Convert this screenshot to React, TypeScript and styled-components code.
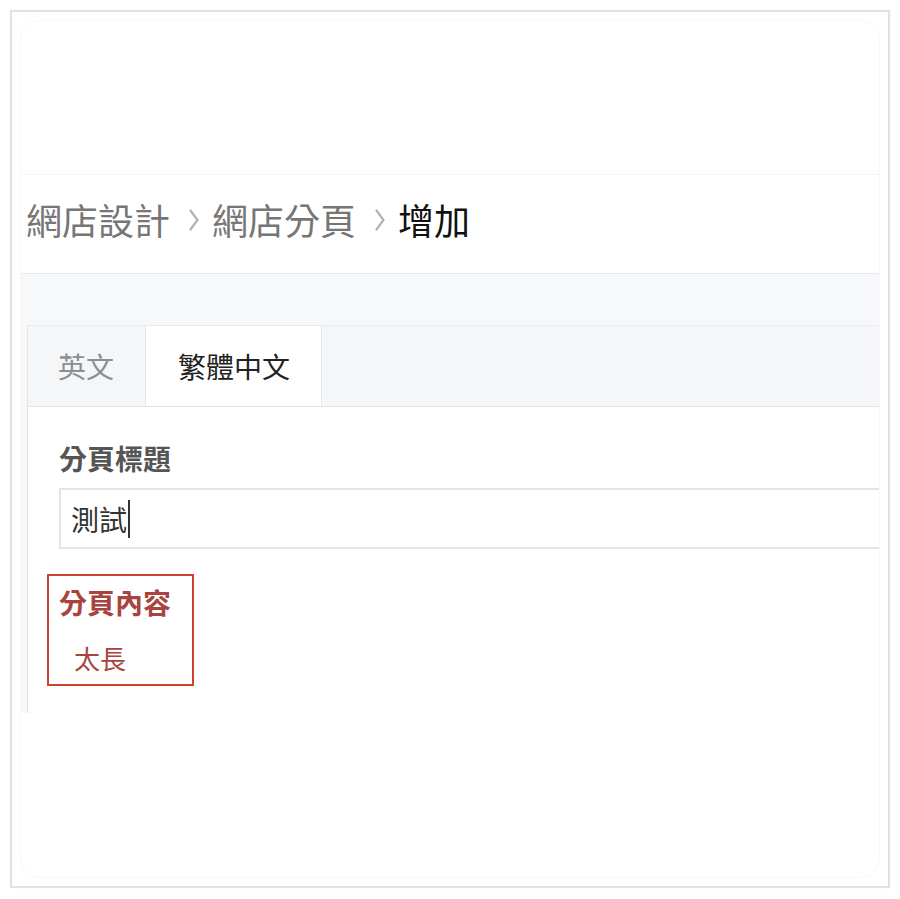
import React from "react";
import styled, { createGlobalStyle } from "styled-components";

const GlobalStyle = createGlobalStyle`
  html, body {
    margin: 0;
    padding: 0;
    background: #ffffff;
  }
  body {
    font-family: "Noto Sans CJK TC", "Noto Sans", "Liberation Sans", sans-serif;
  }
`;

function Chevron() {
  return (
    <ChevronIcon width="10" height="22" viewBox="0 0 10 22">
      <polyline points="1.5,1.5 8.5,11 1.5,20.5" fill="none" stroke="#aeb3ba" strokeWidth="2.2" strokeLinecap="round" strokeLinejoin="round" />
    </ChevronIcon>
  );
}

export default function App() {
  return (
    <>
      <GlobalStyle />
      <Frame>
        <Screen>
          <TopBar />
          <Breadcrumb>
            <Crumb>網店設計</Crumb>
            <Chevron />
            <Crumb>網店分頁</Crumb>
            <Chevron />
            <Crumb $current>增加</Crumb>
          </Breadcrumb>
          <Band>
            <Card>
              <TabBar>
                <Tab>英文</Tab>
                <Tab $active>繁體中文</Tab>
              </TabBar>
              <CardBody>
                <Label>分頁標題</Label>
                <TextBox>
                  測試
                  <Caret />
                </TextBox>
                <ErrorField>
                  <Label $error>分頁內容</Label>
                  <ErrorText>太長</ErrorText>
                </ErrorField>
              </CardBody>
            </Card>
          </Band>
        </Screen>
      </Frame>
    </>
  );
}

const Frame = styled.div`
  box-sizing: border-box;
  margin: 10px;
  height: 878px;
  border: 2px solid #e2e2e2;
  box-shadow: 0 0 1px rgba(0, 0, 0, 0.08);
  padding: 8px;
`;

const Screen = styled.div`
  box-sizing: border-box;
  height: 100%;
  border: 1px solid #f8f8f8;
  border-radius: 20px;
  overflow: hidden;
  display: flex;
  flex-direction: column;
  background: #ffffff;
`;

const TopBar = styled.div`
  height: 153px;
  flex-shrink: 0;
  border-bottom: 1px solid #f4f4f4;
`;

const Breadcrumb = styled.div`
  box-sizing: border-box;
  height: 98px;
  flex-shrink: 0;
  display: flex;
  align-items: center;
  padding: 0 0 10px 5px;
`;

const Crumb = styled.span<{ $current?: boolean }>`
  font-size: 36px;
  line-height: 44px;
  color: ${(p) => (p.$current ? "#111111" : "#767676")};
`;

const ChevronIcon = styled.svg`
  flex-shrink: 0;
  margin: 2px 13px 0 19px;
`;

const Band = styled.div`
  flex-shrink: 0;
  border-top: 1px solid #e7e9ec;
  background: #f7f8fa;
  padding: 51px 0 0 6px;
  display: flex;
`;

const Card = styled.div`
  flex: 1;
  background: #ffffff;
  border-left: 1px solid #e4e6e9;
  border-top: 1px solid #e8eaed;
`;

const TabBar = styled.div`
  display: flex;
  background: #f5f6f8;
  border-bottom: 1px solid #e2e4e7;
`;

const Tab = styled.div<{ $active?: boolean }>`
  height: 80px;
  line-height: 80px;
  padding: 0 31px 0 ${(p) => (p.$active ? "32px" : "30px")};
  font-size: 28px;
  border-right: 1px solid #e6e8eb;
  background: ${(p) => (p.$active ? "#ffffff" : "#f5f6f8")};
  color: ${(p) => (p.$active ? "#222222" : "#8a8f96")};
  margin-bottom: ${(p) => (p.$active ? "-1px" : "0")};
`;

const CardBody = styled.div`
  display: flex;
  flex-direction: column;
  align-items: flex-start;
  padding: 33px 0 27px 31px;
`;

const Label = styled.div<{ $error?: boolean }>`
  font-size: 28px;
  line-height: 36px;
  font-weight: 700;
  color: ${(p) => (p.$error ? "#a8443f" : "#555555")};
`;

const TextBox = styled.div`
  box-sizing: border-box;
  margin-top: 12px;
  width: calc(100% + 20px);
  height: 61px;
  border: 2px solid #e4e4e4;
  display: flex;
  align-items: center;
  padding-left: 10px;
  font-size: 28px;
  color: #333333;
`;

const Caret = styled.span`
  display: inline-block;
  width: 1.5px;
  height: 38px;
  margin-left: 1px;
  background: #333333;
`;

const ErrorField = styled.div`
  margin: 25px 0 0 -12px;
  border: 2px solid #c9452e;
  padding: 8px 21px 8px 10px;
  display: flex;
  flex-direction: column;
`;

const ErrorText = styled.div`
  margin: 20px 0 0 15px;
  font-size: 26px;
  line-height: 36px;
  color: #a8443f;
`;
